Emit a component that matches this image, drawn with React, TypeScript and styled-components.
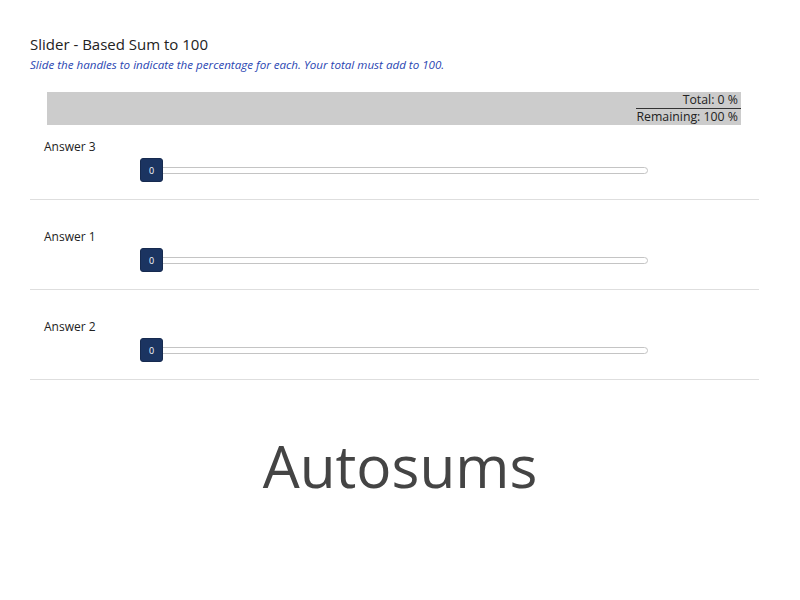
import React from "react";
import styled, { createGlobalStyle } from "styled-components";

const Global = createGlobalStyle`
  html, body { margin: 0; padding: 0; background: #fff; }
  body { font-family: "Open Sans", "Liberation Sans", sans-serif; color: #222; }
`;

const Page = styled.div`
  width: 800px;
  height: 600px;
  box-sizing: border-box;
  padding: 34px 41px 0 30px;
  display: flex;
  flex-direction: column;
`;

const Title = styled.div`
  font-size: 15px;
  line-height: 20px;
  color: #222;
`;

const Instructions = styled.div`
  margin-top: 3px;
  font-size: 11.6px;
  line-height: 16px;
  font-style: italic;
  color: #2a46b2;
`;

const TotalsBar = styled.div`
  margin: 19px 18px 0 17px;
  background: #cccccc;
  display: flex;
  justify-content: flex-end;
`;

const Totals = styled.div`
  display: flex;
  flex-direction: column;
  align-items: stretch;
  text-align: right;
  font-size: 12.3px;
  line-height: 16px;
  color: #222;
`;

const TotalLine = styled.div<{ $divider?: boolean }>`
  padding-right: 3px;
  border-bottom: ${(p) => (p.$divider ? "1px solid #333" : "none")};
`;

const Row = styled.div`
  padding: 28px 0 17px 14px;
  border-bottom: 1px solid #dedede;
  &:first-of-type {
    padding-top: 13px;
  }
`;

const Label = styled.div`
  font-size: 12px;
  line-height: 18px;
  color: #222;
  margin-bottom: 2px;
`;

const SliderArea = styled.div`
  position: relative;
  margin-left: 96px;
  width: 508px;
  height: 24px;
  display: flex;
  align-items: center;
`;

const Track = styled.div`
  width: 100%;
  height: 7px;
  box-sizing: border-box;
  border: 1px solid #c4c4c4;
  border-radius: 4px;
  background: #fff;
`;

const Handle = styled.div`
  position: absolute;
  left: 0;
  top: 0;
  width: 23px;
  height: 24px;
  box-sizing: border-box;
  border-radius: 3px;
  background: #1b3461;
  border: 1px solid #162a4f;
  color: #fff;
  font-size: 9px;
  display: flex;
  align-items: center;
  justify-content: center;
`;

const Watermark = styled.div`
  margin-top: 45px;
  text-align: center;
  font-size: 58.5px;
  line-height: 80px;
  color: #444;
  padding-left: 11px;
`;

const answers = ["Answer 3", "Answer 1", "Answer 2"];

export default function App() {
  return (
    <>
      <Global />
      <Page>
        <Title>Slider - Based Sum to 100</Title>
        <Instructions>
          Slide the handles to indicate the percentage for each. Your total must add to 100.
        </Instructions>
        <TotalsBar>
          <Totals>
            <TotalLine $divider>Total: 0 %</TotalLine>
            <TotalLine>Remaining: 100 %</TotalLine>
          </Totals>
        </TotalsBar>
        <div>
          {answers.map((a) => (
            <Row key={a}>
              <Label>{a}</Label>
              <SliderArea>
                <Track />
                <Handle>0</Handle>
              </SliderArea>
            </Row>
          ))}
        </div>
        <Watermark>Autosums</Watermark>
      </Page>
    </>
  );
}
